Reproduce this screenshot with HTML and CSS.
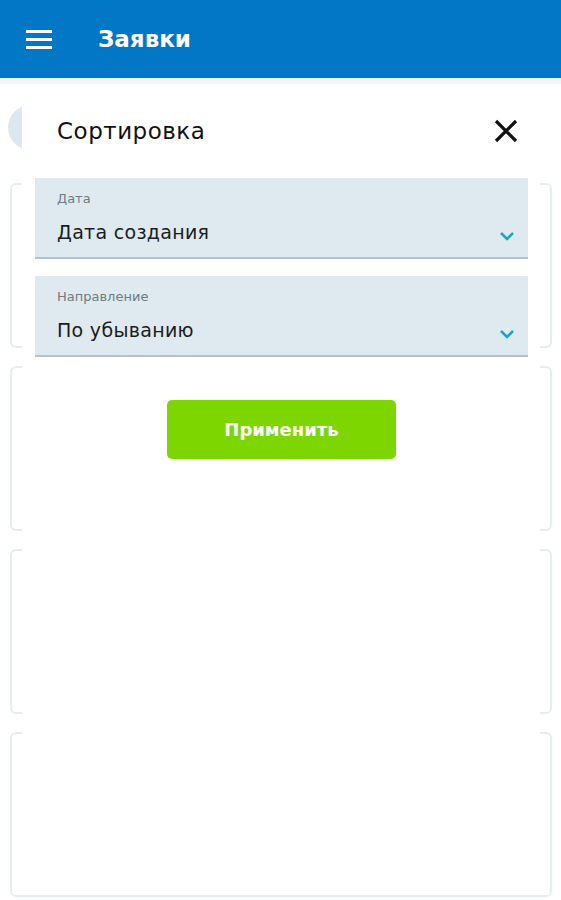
FILE: index.html
```html
<!DOCTYPE html>
<html lang="ru">
<head>
    <meta charset="UTF-8">
    <meta name="viewport" content="width=device-width, initial-scale=1.0">
    <title>Заявки</title>
    <link rel="stylesheet" href="styles.css">
</head>
<body>
    <header class="topbar">
        <button class="menu-btn" aria-label="Меню">
            <span></span><span></span><span></span>
        </button>
        <h1>Заявки</h1>
    </header>

    <main class="page">
        <div class="filters">
            <span class="chip"></span>
        </div>
        <div class="card"></div>
        <div class="card"></div>
        <div class="card"></div>
        <div class="card"></div>

        <section class="sheet">
            <div class="sheet-head">
                <h2>Сортировка</h2>
                <button class="close-btn" aria-label="Закрыть">
                    <svg width="24" height="24" viewBox="0 0 24 24">
                        <path d="M2 2 L22 22 M22 2 L2 22" stroke="#111" stroke-width="3.2" fill="none"/>
                    </svg>
                </button>
            </div>

            <div class="field">
                <span class="field-label">Дата</span>
                <span class="field-value">Дата создания</span>
                <svg class="chevron" width="16" height="10" viewBox="0 0 16 10">
                    <path d="M2 2 L8 8 L14 2" stroke="#1ba6c9" stroke-width="2.6" fill="none"/>
                </svg>
            </div>

            <div class="field">
                <span class="field-label">Направление</span>
                <span class="field-value">По убыванию</span>
                <svg class="chevron" width="16" height="10" viewBox="0 0 16 10">
                    <path d="M2 2 L8 8 L14 2" stroke="#1ba6c9" stroke-width="2.6" fill="none"/>
                </svg>
            </div>

            <div class="actions">
                <button class="apply-btn">Применить</button>
            </div>
        </section>
    </main>
</body>
</html>
```

FILE: styles.css
```css
body {
    margin: 0;
    font-family: "DejaVu Sans", "Noto Sans", sans-serif;
    background-color: #fff;
    color: #1b1b1b;
}

.topbar {
    height: 78px;
    background-color: #0277c6;
    display: flex;
    align-items: center;
    box-sizing: border-box;
    padding-left: 26px;
}

.topbar h1 {
    margin: 0 0 0 46px;
    color: #fff;
    font-size: 23px;
    font-weight: 700;
}

.menu-btn {
    background: none;
    border: none;
    padding: 0;
    width: 26px;
    display: flex;
    flex-direction: column;
    gap: 5px;
    cursor: pointer;
}

.menu-btn span {
    display: block;
    height: 3px;
    background-color: #fff;
}

.page {
    position: relative;
    background-color: #fff;
    border-top: 6px solid #f1f5f8;
    padding: 0 9px 8px 10px;
}

.filters {
    height: 45px;
    margin-top: 21px;
    margin-left: -2px;
}

.chip {
    display: block;
    width: 60px;
    height: 45px;
    border-radius: 23px;
    background-color: #dde8ee;
}

.card {
    height: 161px;
    margin-top: 18px;
    border: 2px solid #e4eef1;
    border-radius: 6px;
}

.filters + .card {
    margin-top: 33px;
}

.sheet {
    position: absolute;
    top: 0;
    left: 22px;
    right: 21px;
    bottom: 15px;
    background-color: #fff;
    padding: 0 12px 0 13px;
}

.sheet-head {
    height: 94px;
    display: flex;
    align-items: center;
    justify-content: space-between;
    padding-left: 22px;
    padding-right: 10px;
}

.sheet-head h2 {
    margin: 0;
    font-size: 23px;
    font-weight: 400;
    letter-spacing: 0.5px;
    color: #111;
}

.close-btn {
    background: none;
    border: none;
    padding: 0;
    cursor: pointer;
    display: flex;
}

.field {
    position: relative;
    height: 79px;
    background-color: #dfeaf0;
    border-bottom: 2px solid #b5c3ca;
    padding-left: 22px;
    box-sizing: content-box;
    display: flex;
    flex-direction: column;
    margin-bottom: 17px;
}

.field-label {
    font-size: 13px;
    color: #6f7a80;
    margin-top: 13px;
}

.field-value {
    font-size: 19px;
    letter-spacing: 0.3px;
    color: #1b1b1b;
    margin-top: 15px;
}

.chevron {
    position: absolute;
    right: 13px;
    top: 53px;
}

.actions {
    display: flex;
    justify-content: center;
    padding-top: 26px;
}

.apply-btn {
    width: 229px;
    height: 59px;
    background-color: #7ed600;
    color: #fff;
    border: none;
    border-radius: 5px;
    font-family: "DejaVu Sans", sans-serif;
    font-size: 18px;
    font-weight: 700;
    cursor: pointer;
}
```
